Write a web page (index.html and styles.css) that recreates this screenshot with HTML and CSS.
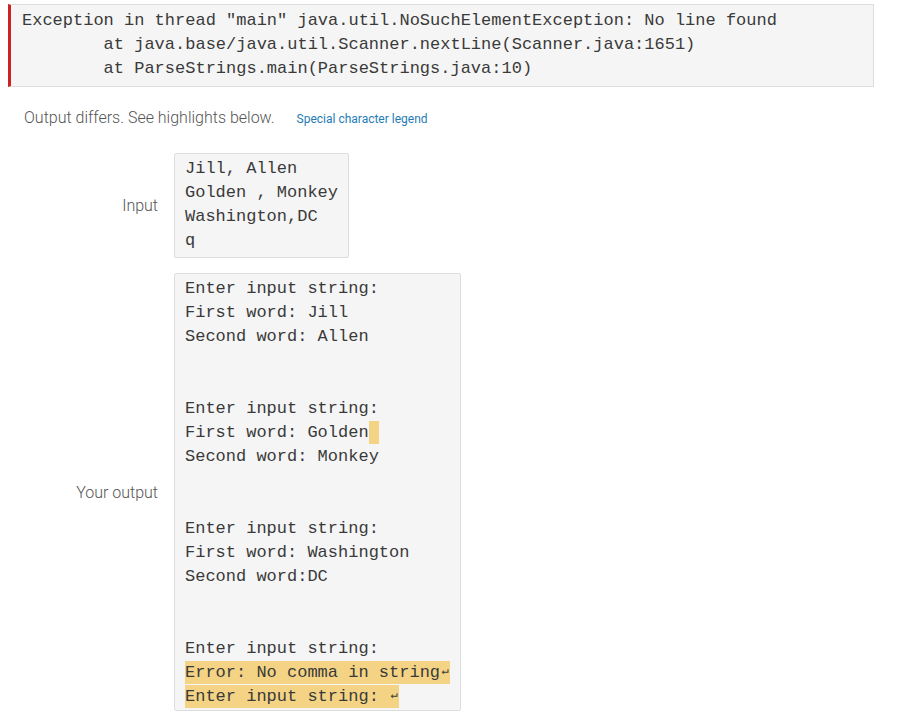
FILE: index.html
```html
<!DOCTYPE html>
<html>
<head>
<meta charset="utf-8">
<link rel="stylesheet" href="styles.css">
</head>
<body>
<div class="page">
  <pre class="error">Exception in thread "main" java.util.NoSuchElementException: No line found
        at java.base/java.util.Scanner.nextLine(Scanner.java:1651)
        at ParseStrings.main(ParseStrings.java:10)</pre>
  <div class="status">
    <span class="differs">Output differs. See highlights below.</span>
    <span class="legend">Special character legend</span>
  </div>
  <div class="row row-input">
    <div class="label">Input</div>
    <div class="box">
      <div class="line">Jill, Allen</div>
      <div class="line">Golden , Monkey</div>
      <div class="line">Washington,DC</div>
      <div class="line">q</div>
    </div>
  </div>
  <div class="row">
    <div class="label">Your output</div>
    <div class="box box-output">
      <div class="line">Enter input string:</div>
      <div class="line">First word: Jill</div>
      <div class="line">Second word: Allen</div>
      <div class="line"></div>
      <div class="line"></div>
      <div class="line">Enter input string:</div>
      <div class="line">First word: Golden<span class="hl"> </span></div>
      <div class="line">Second word: Monkey</div>
      <div class="line"></div>
      <div class="line"></div>
      <div class="line">Enter input string:</div>
      <div class="line">First word: Washington</div>
      <div class="line">Second word:DC</div>
      <div class="line"></div>
      <div class="line"></div>
      <div class="line">Enter input string:</div>
      <div class="line"><span class="hl">Error: No comma in string<span class="nl">↵</span></span></div>
      <div class="line"><span class="hl">Enter input string: <span class="nl">↵</span></span></div>
    </div>
  </div>
</div>
</body>
</html>
```
FILE: styles.css
```css
html, body {
  margin: 0;
  padding: 0;
  background: #ffffff;
}

.page {
  padding: 4px 28px 0 8px;
  font-family: "Roboto", "Liberation Sans", sans-serif;
}

.error {
  margin: 0;
  width: 866px;
  box-sizing: border-box;
  background: #f5f5f5;
  border: 1px solid #dddddd;
  border-left: 3px solid #cc2222;
  padding: 4px 10px 5px 11px;
  font-family: "Liberation Mono", "Courier New", monospace;
  font-size: 17px;
  line-height: 24px;
  color: #3a3a3a;
  white-space: pre;
}

.status {
  display: flex;
  align-items: baseline;
  gap: 22px;
  padding: 21px 0 0 16px;
  height: 47px;
  box-sizing: border-box;
}

.differs {
  font-size: 16px;
  font-weight: 300;
  color: #555555;
}

.legend {
  font-size: 12px;
  color: #1f7bb6;
}

.row {
  display: flex;
  align-items: center;
  gap: 16px;
}

.row-input {
  margin-top: 19px;
  margin-bottom: 15px;
}

.label {
  width: 150px;
  text-align: right;
  font-size: 16px;
  font-weight: 300;
  color: #555555;
}

.box {
  background: #f5f5f5;
  border: 1px solid #dddddd;
  border-radius: 2px;
  padding: 3px 10px 4px 10px;
  font-family: "Liberation Mono", "Courier New", monospace;
  font-size: 17px;
  color: #3a3a3a;
}

.box-output {
  padding: 3px 10px 1px 10px;
}

.line {
  height: 24px;
  line-height: 24px;
  white-space: pre;
}

.hl {
  display: inline-block;
  height: 23px;
  line-height: 23px;
  background: #f4d484;
  vertical-align: top;
}

.nl {
  display: inline-block;
  width: 10.2px;
  font-size: 12px;
  text-align: center;
  vertical-align: top;
  line-height: 20px;
}
```
